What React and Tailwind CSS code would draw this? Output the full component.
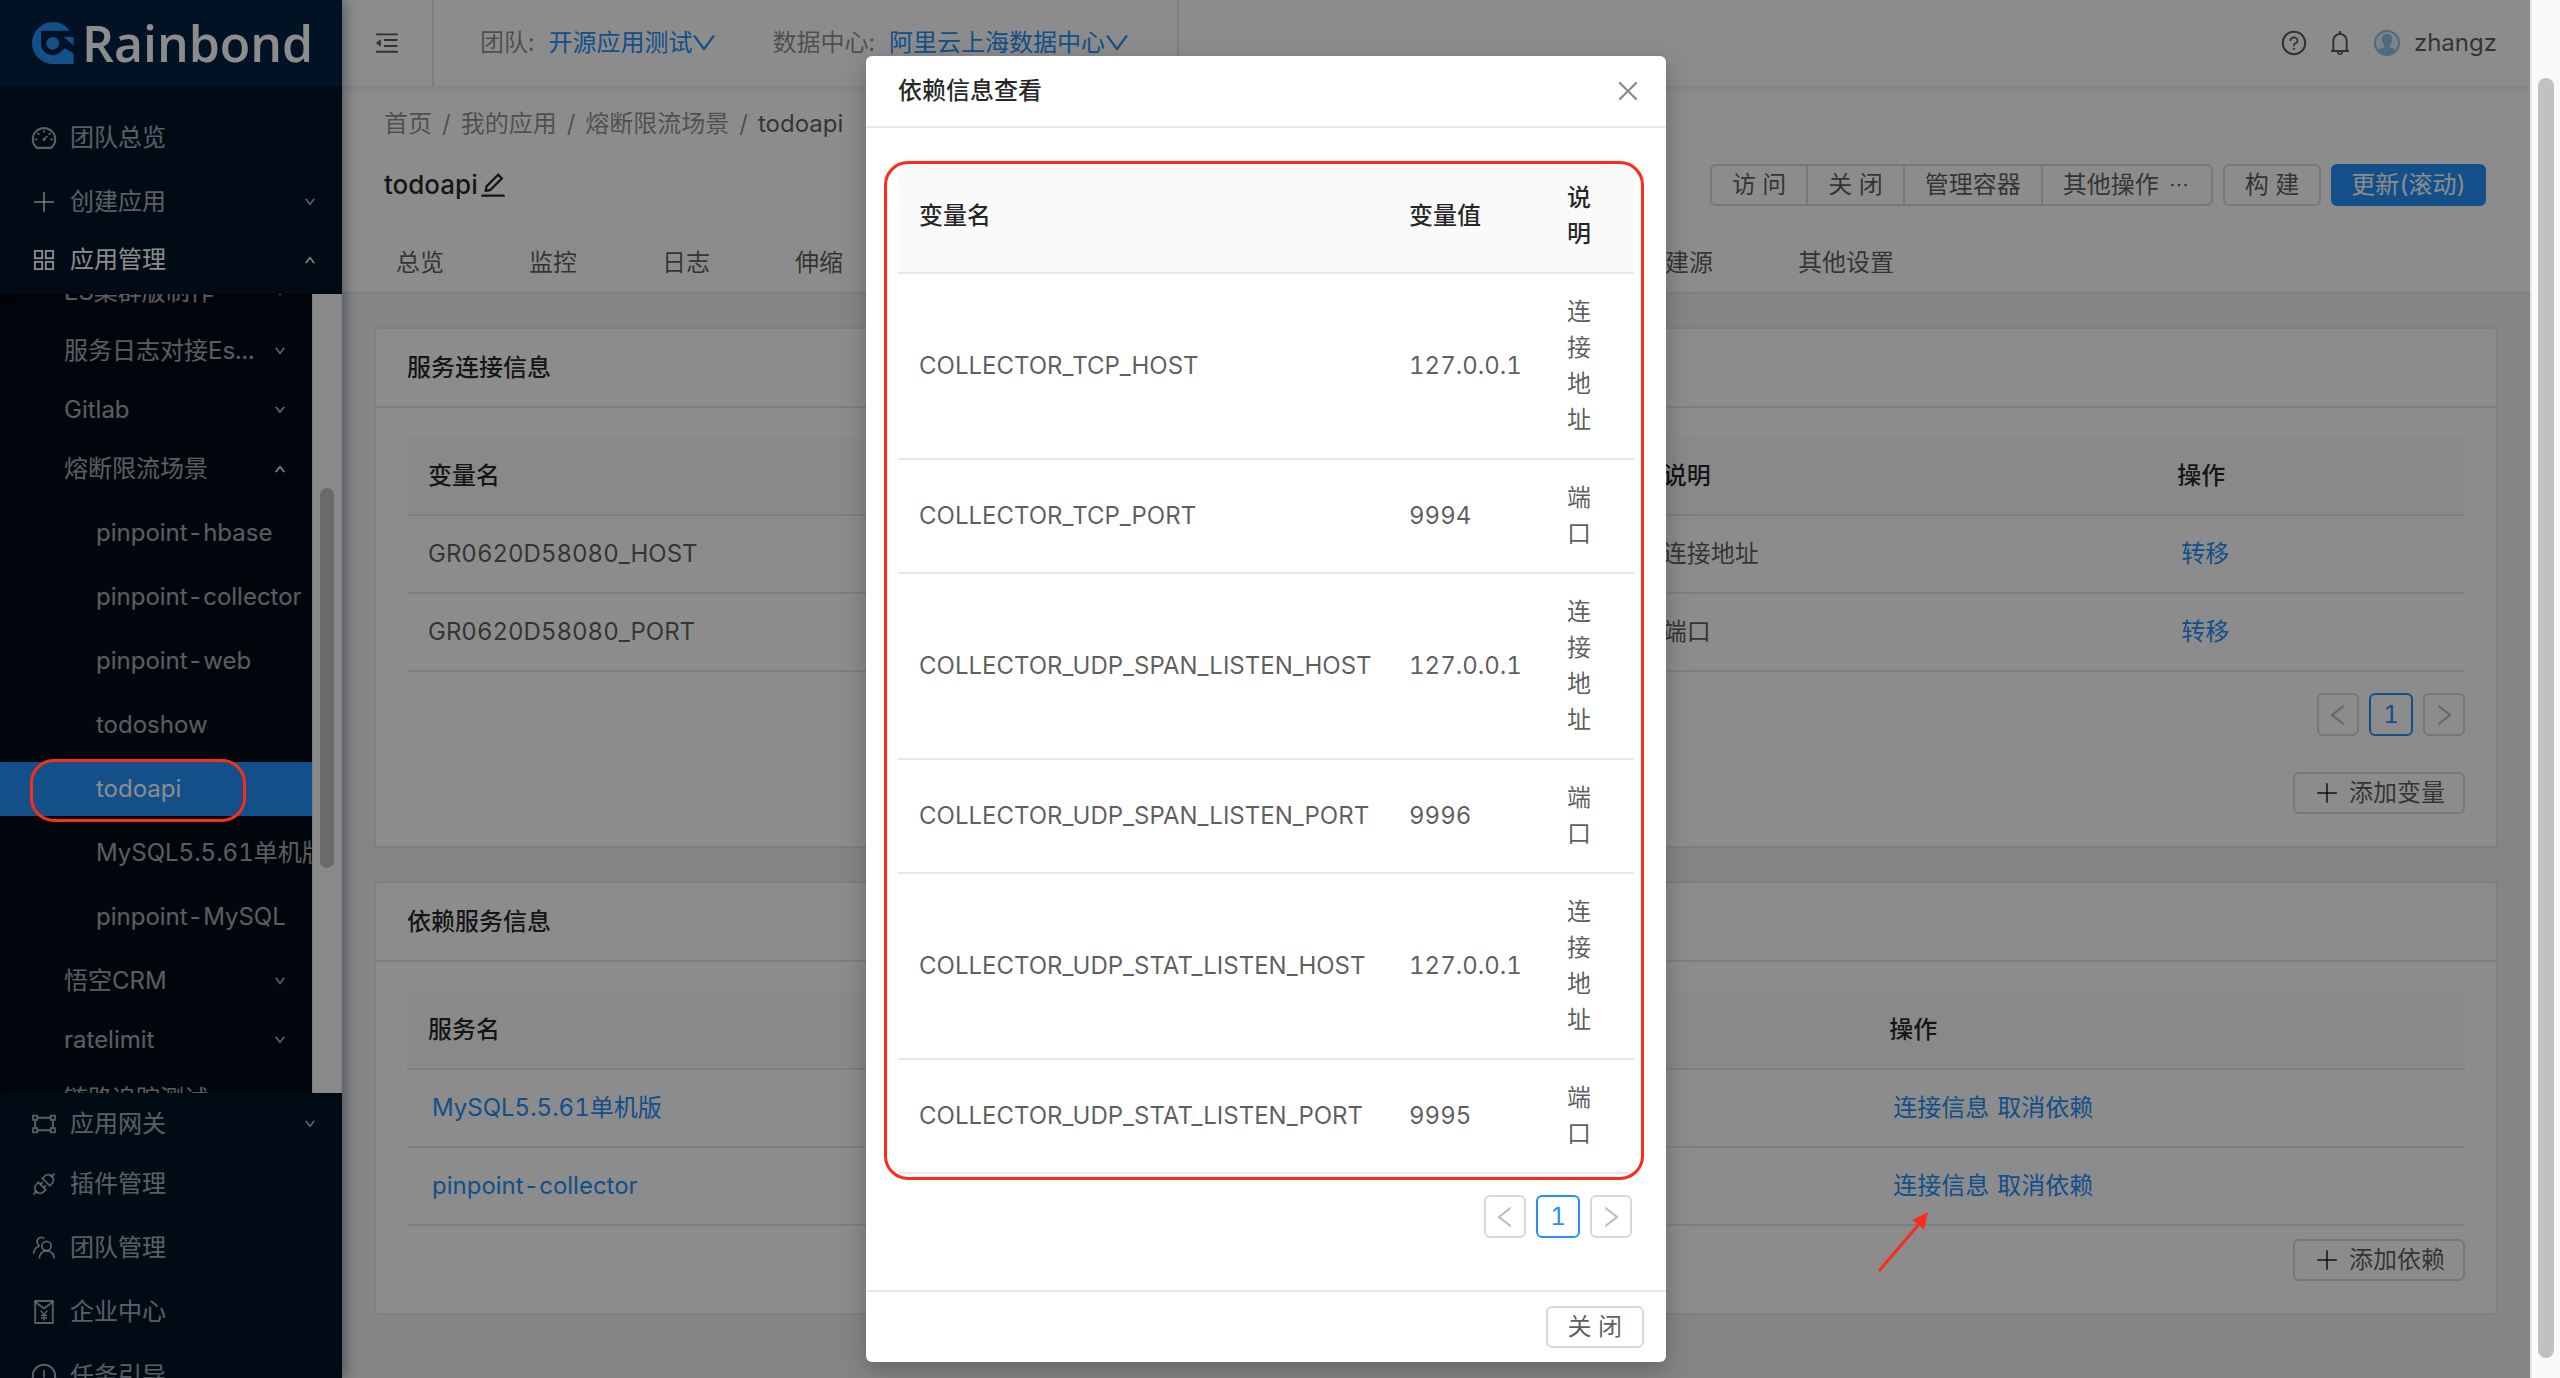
import React from 'react';
import {
  AiOutlineAppstore,
  AiOutlineBell,
  AiOutlineClose,
  AiOutlineDashboard,
  AiOutlineDown,
  AiOutlineEdit,
  AiOutlineEllipsis,
  AiOutlineExclamationCircle,
  AiOutlineGateway,
  AiOutlineLeft,
  AiOutlineMenuFold,
  AiOutlinePlus,
  AiOutlineQuestionCircle,
  AiOutlineRight,
  AiOutlineUp,
} from 'react-icons/ai';

const apps = [
  { name: 'ES集群版制作' },
  { name: '服务日志对接Es...' },
  { name: 'Gitlab' },
  {
    name: '熔断限流场景',
    children: [
      'pinpoint-hbase',
      'pinpoint-collector',
      'pinpoint-web',
      'todoshow',
      'todoapi',
      'MySQL5.5.61单机版',
      'pinpoint-MySQL',
    ],
  },
  { name: '悟空CRM' },
  { name: 'ratelimit' },
  { name: '链路追踪测试' },
];

const tabs = ['总览', '监控', '日志', '伸缩', '环境配置', '依赖', '存储', '端口', '插件', '构建源', '其他设置'];

const variables = [
  { name: 'GR0620D58080_HOST', value: '127.0.0.1', desc: '连接地址' },
  { name: 'GR0620D58080_PORT', value: '8080', desc: '端口' },
];

const dependencies = [
  { name: 'MySQL5.5.61单机版', app: '熔断限流场景' },
  { name: 'pinpoint-collector', app: '熔断限流场景' },
];

const collectorVars = [
  { name: 'COLLECTOR_TCP_HOST', value: '127.0.0.1', desc: '连接地址' },
  { name: 'COLLECTOR_TCP_PORT', value: '9994', desc: '端口' },
  { name: 'COLLECTOR_UDP_SPAN_LISTEN_HOST', value: '127.0.0.1', desc: '连接地址' },
  { name: 'COLLECTOR_UDP_SPAN_LISTEN_PORT', value: '9996', desc: '端口' },
  { name: 'COLLECTOR_UDP_STAT_LISTEN_HOST', value: '127.0.0.1', desc: '连接地址' },
  { name: 'COLLECTOR_UDP_STAT_LISTEN_PORT', value: '9995', desc: '端口' },
];

function ApiIcon() {
  return (
    <svg viewBox="0 0 24 24" className="size-6" fill="none" stroke="currentColor" strokeWidth="1.7">
      <path d="M1.5 22.5l3.6-3.6M18.9 5.1l3.6-3.6" />
      <path d="M6.2 10.2l7.6 7.6-2.2 2.1a5.1 5.1 0 0 1-7.3 0 5.1 5.1 0 0 1 0-7.4z" />
      <path d="M10.2 6.2l7.6 7.6 2.1-2.2a5.1 5.1 0 0 0 0-7.3 5.1 5.1 0 0 0-7.4 0z" />
      <path d="M8.4 12.4l2.2-2.2M11.6 15.6l2.2-2.2" />
    </svg>
  );
}

function TeamIcon() {
  return (
    <svg viewBox="0 0 24 24" className="size-6" fill="none" stroke="currentColor" strokeWidth="1.8">
      <circle cx="14.5" cy="10" r="4.6" />
      <path d="M7.3 22.5c0-4.2 3-7.9 7.2-7.9s7.7 3.7 7.7 7.9" />
      <path d="M12.5 2.7A4.4 4.4 0 0 0 5 5.8c0 2 1 3.2 2.4 4.1" />
      <path d="M7.4 10C4 11.2 1.8 14.2 1.6 17.6" />
    </svg>
  );
}

function RedEnvelopeIcon() {
  return (
    <svg viewBox="0 0 24 24" className="size-6" fill="none" stroke="currentColor" strokeWidth="1.8">
      <path d="M3.2 1h17.6v22H3.2z" />
      <path d="M3.2 2l8.8 6.5L20.8 2" />
      <path d="M8.8 10.5l3.2 4.5 3.2-4.5M12 15v5.5M9 15.5h6M9 18h6" strokeWidth="1.4" />
    </svg>
  );
}

function Logo() {
  return (
    <a href="#" className="flex h-[86px] shrink-0 items-center gap-2 bg-[#002140] pl-8 text-white">
      <svg viewBox="0 0 42 42" className="size-[42px] shrink-0" fill="#2490fa">
        <path d="M21 0c7 0 13 3 16.5 8.7H9v12.6a11.7 11.7 0 0 0 20.5 7.8l3.3-2.8 8.8 5V42H21a21 21 0 0 1 0-42z" />
        <path d="M31.5 15h10.1v8.6z" />
        <circle cx="20.7" cy="21.3" r="6.4" />
      </svg>
      <span className="font-['Open_Sans'] text-[50px] leading-[60px] font-semibold">Rainbond</span>
    </a>
  );
}

function MenuItem({ icon, label, arrow, active }) {
  return (
    <a
      href="#"
      className={`flex h-[54px] shrink-0 items-center gap-3 pr-[26px] pl-[30px] ${active ? 'text-white' : 'text-white/65'}`}
    >
      <span className="flex w-7 justify-center text-[28px]">{icon}</span>
      <span className="flex-1">{label}</span>
      {arrow === 'down' && <AiOutlineDown className="size-3 stroke-[60px]" />}
      {arrow === 'up' && <AiOutlineUp className="size-3 stroke-[60px]" />}
    </a>
  );
}

function AppTree() {
  return (
    <div className="mt-[7px] mb-1 flex h-[799px] shrink-0 overflow-hidden bg-[#000c17] shadow-[inset_0_4px_16px_rgba(0,0,0,0.45)]">
      <ul className="-mt-[29px] flex min-w-0 flex-1 flex-col gap-[5px] overflow-hidden text-white/65">
        {apps.map((app) => (
          <li key={app.name}>
            <a href="#" className="flex h-[54px] items-center justify-between pr-[26px] pl-16">
              <span>{app.name}</span>
              {app.children ? (
                <AiOutlineUp className="size-3 stroke-[60px] text-white" />
              ) : (
                <AiOutlineDown className="size-3 stroke-[60px]" />
              )}
            </a>
            {app.children && (
              <ul className="mt-2.5 mb-[5px] flex flex-col gap-2.5">
                {app.children.map((name) => (
                  <li key={name}>
                    <a
                      href="#"
                      className={`flex h-[54px] items-center pl-24 whitespace-nowrap ${
                        name === 'todoapi' ? 'bg-[#2490fa] text-white' : ''
                      }`}
                    >
                      {name}
                    </a>
                  </li>
                ))}
              </ul>
            )}
          </li>
        ))}
      </ul>
      <div className="w-[30px] shrink-0 border-x border-[#e8e8e8] bg-[#fafafa] px-[7px] pt-[194px]">
        <div className="h-[380px] rounded-full bg-[#c1c1c1]" />
      </div>
    </div>
  );
}

function Sidebar() {
  return (
    <aside className="relative z-10 flex w-[342px] shrink-0 flex-col bg-[#001529] shadow-[4px_0_12px_rgba(0,21,41,0.35)]">
      <Logo />
      <nav className="mt-[25px] flex flex-col">
        <div className="flex flex-col gap-2.5">
          <MenuItem icon={<AiOutlineDashboard />} label="团队总览" />
          <MenuItem icon={<AiOutlinePlus />} label="创建应用" arrow="down" />
        </div>
        <div className="mt-1 flex flex-col">
          <MenuItem icon={<AiOutlineAppstore />} label="应用管理" arrow="up" active />
          <AppTree />
          <MenuItem icon={<AiOutlineGateway />} label="应用网关" arrow="down" />
        </div>
        <div className="mt-1.5 flex flex-col gap-2.5">
          <MenuItem icon={<ApiIcon />} label="插件管理" />
          <MenuItem icon={<TeamIcon />} label="团队管理" />
          <MenuItem icon={<RedEnvelopeIcon />} label="企业中心" />
          <MenuItem icon={<AiOutlineExclamationCircle />} label="任务引导" />
        </div>
      </nav>
    </aside>
  );
}

function TopBar() {
  return (
    <header className="relative flex h-[86px] items-center bg-white text-black/65 shadow-[0_2px_8px_rgba(0,21,41,0.1)]">
      <button type="button" aria-label="收起菜单" className="flex h-full w-[92px] items-center border-r-2 border-[#e8e8e8] pl-[31px]">
        <AiOutlineMenuFold className="size-7" />
      </button>
      <div className="flex h-full items-center gap-14 border-r-2 border-[#e8e8e8] pr-12 pl-[46px]">
        <div className="flex items-center gap-3.5">
          <span className="text-black/45">团队:</span>
          <a href="#" className="flex items-center text-[#2490fa]">
            开源应用测试
            <AiOutlineDown className="-mx-[3px] size-[30px]" />
          </a>
        </div>
        <div className="flex items-center gap-3.5">
          <span className="text-black/45">数据中心:</span>
          <a href="#" className="flex items-center text-[#2490fa]">
            阿里云上海数据中心
            <AiOutlineDown className="-mx-[3px] size-[30px]" />
          </a>
        </div>
      </div>
      <div className="ml-auto flex items-center pr-[33px]">
        <AiOutlineQuestionCircle className="mr-[18px] size-7" />
        <AiOutlineBell className="mr-5 size-7" />
        <svg viewBox="0 0 26 26" className="mr-3.5 size-[26px]">
          <circle cx="13" cy="13" r="12" fill="#e4f2fc" stroke="#8cc4ec" strokeWidth="2" />
          <path
            fill="#8cc4ec"
            d="M13 4c3.6 0 5.4 2.4 5.2 5.6-.2 2.6-1.2 4.4-2.4 5.6v2c1.8 1 5 1.4 6.5 3.6A12.5 12.5 0 0 1 3.7 20.8c1.5-2.2 4.7-2.6 6.500-3.600v-2C9 14 8 12.200 7.800 9.600 7.600 6.400 9.400 4 13 4z"
          />
        </svg>
        <span>zhangz</span>
      </div>
    </header>
  );
}

function PageHeader() {
  const button = 'h-[42px] border-2 border-[#d9d9d9] bg-white px-5 leading-[38px]';
  return (
    <section className="border-b-2 border-[#e8e8e8] bg-white px-[42px] pt-5 text-black/65">
      <nav className="flex gap-2.5 text-black/45">
        <a href="#">首页</a>
        <span>/</span>
        <a href="#">我的应用</a>
        <span>/</span>
        <a href="#">熔断限流场景</a>
        <span>/</span>
        <span className="text-black/65">todoapi</span>
      </nav>
      <div className="mt-[22px] flex h-[42px] items-center justify-between pr-0.5">
        <h1 className="flex items-center text-[26px] font-medium text-black/85">
          todoapi
          <AiOutlineEdit className="size-[30px]" />
        </h1>
        <div className="flex gap-2.5">
          <div className="flex">
            <button type="button" className={`${button} rounded-l-md`}>访 问</button>
            <button type="button" className={`${button} -ml-0.5`}>关 闭</button>
            <button type="button" className={`${button} -ml-0.5`}>管理容器</button>
            <button type="button" className={`${button} -ml-0.5 flex items-center gap-2 rounded-r-md`}>
              其他操作
              <AiOutlineEllipsis className="size-6" />
            </button>
          </div>
          <button type="button" className={`${button} rounded-md`}>构 建</button>
          <button type="button" className="h-[42px] rounded-md bg-[#2490fa] px-5 text-white">更新(滚动)</button>
        </div>
      </div>
      <div className="flex h-[86px] items-center gap-[85px] pt-[27px] pl-3 whitespace-nowrap">
        {tabs.map((tab) => (
          <a href="#" key={tab}>{tab}</a>
        ))}
      </div>
    </section>
  );
}

function Card({ title, children }) {
  return (
    <section className="rounded border-2 border-[#e8e8e8] bg-white">
      <h2 className="flex h-[79px] items-center border-b-2 border-[#e8e8e8] px-[31px] font-medium text-black/85">{title}</h2>
      <div className="px-[31px] pt-[30px] pb-8">{children}</div>
    </section>
  );
}

function Pagination({ className }) {
  const arrow = 'flex h-[43px] w-[42px] items-center justify-center rounded-md border-2 border-[#d9d9d9] text-black/25';
  return (
    <div className={`flex justify-end gap-2.5 ${className}`}>
      <button type="button" aria-label="上一页" disabled className={arrow}>
        <AiOutlineLeft className="size-7 shrink-0" />
      </button>
      <button type="button" className="flex h-[43px] w-11 items-center justify-center rounded-md border-2 border-[#2490fa] text-[#2490fa]">
        1
      </button>
      <button type="button" aria-label="下一页" disabled className={arrow}>
        <AiOutlineRight className="size-7 shrink-0" />
      </button>
    </div>
  );
}

function AddButton({ label, className }) {
  return (
    <div className={`flex justify-end ${className}`}>
      <button type="button" className="flex h-[42px] items-center gap-2 rounded-md border-2 border-[#d9d9d9] bg-white px-[18px]">
        <AiOutlinePlus className="size-7" />
        {label}
      </button>
    </div>
  );
}

const headCell = 'px-[21px] py-5 text-left font-medium text-black/85';
const bodyCell = 'px-[21px] py-5';

function VariablesCard() {
  return (
    <Card title="服务连接信息">
      <table className="w-full table-fixed">
        <thead className="bg-[#fafafa]">
          <tr className="border-b-2 border-[#e8e8e8]">
            <th className={`${headCell} w-[30%]`}>变量名</th>
            <th className={`${headCell} w-[30%]`}>变量值</th>
            <th className={`${headCell} w-[25%]`}>说明</th>
            <th className={headCell}>操作</th>
          </tr>
        </thead>
        <tbody>
          {variables.map((row) => (
            <tr key={row.name} className="border-b-2 border-[#e8e8e8]">
              <td className={bodyCell}>{row.name}</td>
              <td className={bodyCell}>{row.value}</td>
              <td className={bodyCell}>{row.desc}</td>
              <td className={bodyCell}>
                <a href="#" className="px-1 text-[#2490fa]">转移</a>
              </td>
            </tr>
          ))}
        </tbody>
      </table>
      <Pagination className="mt-[21px]" />
      <AddButton label="添加变量" className="mt-9" />
    </Card>
  );
}

function DependenciesCard() {
  return (
    <Card title="依赖服务信息">
      <table className="w-full table-fixed">
        <thead className="bg-[#fafafa]">
          <tr className="border-b-2 border-[#e8e8e8]">
            <th className={`${headCell} w-[46%]`}>服务名</th>
            <th className={`${headCell} w-[25%]`}>所属应用</th>
            <th className={headCell}>操作</th>
          </tr>
        </thead>
        <tbody>
          {dependencies.map((row) => (
            <tr key={row.name} className="border-b-2 border-[#e8e8e8]">
              <td className={bodyCell}>
                <a href="#" className="px-1 text-[#2490fa]">{row.name}</a>
              </td>
              <td className={bodyCell}>{row.app}</td>
              <td className={bodyCell}>
                <div className="flex gap-2 px-1 text-[#2490fa]">
                  <a href="#">连接信息</a>
                  <a href="#">取消依赖</a>
                </div>
              </td>
            </tr>
          ))}
        </tbody>
      </table>
      <AddButton label="添加依赖" className="mt-[13px]" />
    </Card>
  );
}

function DependencyModal() {
  return (
    <div
      role="dialog"
      aria-label="依赖信息查看"
      className="w-[800px] rounded-md bg-white shadow-[0_8px_24px_rgba(0,0,0,0.25)]"
    >
      <div className="flex h-[72px] items-center justify-between border-b-2 border-[#e8e8e8] pr-6 pl-8">
        <h2 className="font-medium text-black/85">依赖信息查看</h2>
        <button type="button" aria-label="关闭" className="text-black/45">
          <AiOutlineClose className="size-7" />
        </button>
      </div>
      <div className="relative p-8">
        <table className="w-full table-fixed">
          <thead className="bg-[#fafafa]">
            <tr className="border-b-2 border-[#e8e8e8]">
              <th className={headCell}>变量名</th>
              <th className={`${headCell} w-[158px]`}>变量值</th>
              <th className={`${headCell} w-[88px]`}>说明</th>
            </tr>
          </thead>
          <tbody>
            {collectorVars.map((row) => (
              <tr key={row.name} className="border-b-2 border-[#e8e8e8]">
                <td className={bodyCell}>{row.name}</td>
                <td className={bodyCell}>{row.value}</td>
                <td className={bodyCell}>{row.desc}</td>
              </tr>
            ))}
          </tbody>
        </table>
        <Pagination className="mt-[21px] mb-5 pr-0.5" />
        <div className="absolute top-[33px] right-[22px] bottom-[110px] left-[18px] rounded-3xl border-[3px] border-[#fb2c1c]" />
      </div>
      <div className="flex h-[72px] items-center justify-end border-t-2 border-[#e8e8e8] px-[22px]">
        <button type="button" className="h-[42px] rounded-md border-2 border-[#d9d9d9] px-5 leading-[38px]">关 闭</button>
      </div>
    </div>
  );
}

function App() {
  return (
    <div className="flex h-screen overflow-hidden bg-[#fafafa] font-[Inter,'Noto_Sans_CJK_SC',sans-serif] text-[24px] leading-[36px] text-black/65 tabular-nums">
      <div className="relative flex min-w-0 flex-1 overflow-hidden bg-[#f0f2f5]">
        <Sidebar />
        <main className="min-w-0 flex-1">
          <TopBar />
          <PageHeader />
          <div className="flex flex-col gap-[33px] py-[33px] pr-8 pl-8">
            <VariablesCard />
            <DependenciesCard />
          </div>
        </main>

        <div className="absolute inset-0 z-20 flex items-start justify-center bg-black/45 pt-14 pl-0.5">
          <DependencyModal />
        </div>

        {/* annotations */}
        <div className="absolute top-[759px] left-[30px] z-30 h-[63px] w-[216px] rounded-3xl border-[3px] border-[#fb2c1c]" />
        <svg viewBox="0 0 54 64" className="absolute top-[1210px] left-[1876px] z-30 h-16 w-[54px]">
          <path d="M3 61L44 13" stroke="#fb2c1c" strokeWidth="3" />
          <path d="M52 2L48 20L43 15L36 10z" fill="#fb2c1c" />
        </svg>
      </div>
      <div className="w-[30px] shrink-0 border-l-2 border-[#e8e8e8] bg-[#fafafa] px-1.5 pt-[78px] pb-5">
        <div className="h-full rounded-full bg-[#c1c1c1]" />
      </div>
    </div>
  );
}

export default App;
